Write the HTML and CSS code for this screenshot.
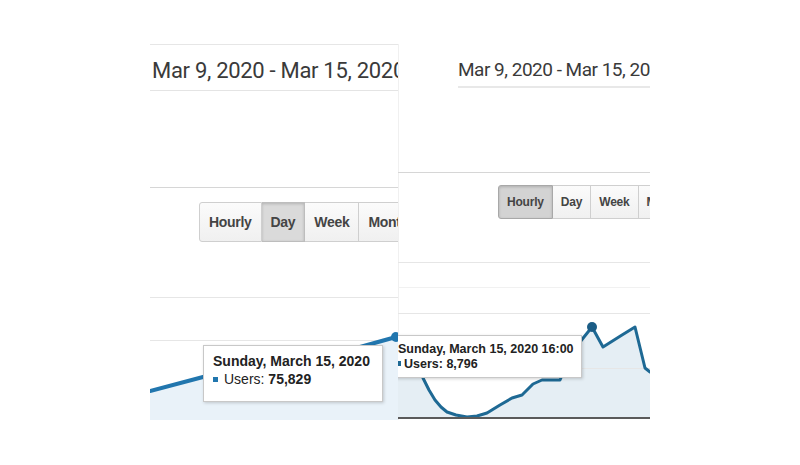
FILE: index.html
```html
<!DOCTYPE html>
<html lang="en">
<head>
  <meta charset="UTF-8">
  <meta name="viewport" content="width=device-width, initial-scale=1.0">
  <title>Users: Day vs Hourly</title>
  <link rel="stylesheet" href="styles.css">
</head>
<body>

  <div class="pair">
    <section class="panel panel-day">
      <div class="range">Mar 9, 2020 - Mar 15, 2020</div>
      <div class="toolbar">
        <div class="periods">
          <button type="button">Hourly</button><button type="button" class="on">Day</button><button type="button">Week</button><button type="button">Month</button>
        </div>
      </div>
      <div class="chart">
        <svg width="248" height="178" viewBox="0 0 248 178">
          <line class="grid" x1="0" y1="55.5" x2="248" y2="55.5"/>
          <line class="grid" x1="0" y1="98.5" x2="248" y2="98.5"/>
          <polygon class="area" points="0,149 53,135 130,120 210,105 246,95 248,95 248,178 0,178"/>
          <polyline class="trend" points="0,149 53,135 130,120 210,105 246,95"/>
          <circle class="dot" cx="246" cy="95" r="5"/>
        </svg>
        <div class="tip">
          <div class="tip-date">Sunday, March 15, 2020</div>
          <div class="tip-row"><span class="mark"></span>Users: <b>75,829</b></div>
        </div>
      </div>
    </section>

    <section class="panel panel-hourly">
      <div class="range">Mar 9, 2020 - Mar 15, 2020</div>
      <div class="toolbar">
        <div class="periods">
          <button type="button" class="on">Hourly</button><button type="button">Day</button><button type="button">Week</button><button type="button">Month</button>
        </div>
      </div>
      <div class="chart">
        <svg width="252" height="201" viewBox="0 0 252 201">
          <line class="grid" x1="0" y1="43.5" x2="252" y2="43.5"/>
          <line class="grid faint" x1="0" y1="68.5" x2="252" y2="68.5"/>
          <line class="grid" x1="0" y1="94.5" x2="252" y2="94.5"/>
          <polygon class="area" points="0,120 12,126 19,143 25,159 31,171 37,181 43,188 49,193 58,196 69,198 79,197 89,194 102,186 114,179 124,176 135,165 144,161 162,161 174,133 194,108 205,128 224,116 237,108 247,149 252,153 252,199 0,199"/>
          <line class="grid" x1="0" y1="149.5" x2="252" y2="149.5"/>
          <polyline class="trend" points="-2,119 12,126 19,143 25,159 31,171 37,181 43,188 49,193 58,196 69,198 79,197 89,194 102,186 114,179 124,176 135,165 144,161 162,161 174,133 194,108 205,128 224,116 237,108 247,149 252,153"/>
          <line class="axis" x1="0" y1="199" x2="252" y2="199"/>
          <circle class="dot" cx="194" cy="108" r="5"/>
        </svg>
        <div class="tip">
          <div class="tip-date">Sunday, March 15, 2020 16:00</div>
          <div class="tip-row"><span class="mark"></span><b>Users: 8,796</b></div>
        </div>
      </div>
    </section>
  </div>

</body>
</html>
```

FILE: styles.css
```css
body {
  margin: 0;
  background: #fff;
  font-family: 'Liberation Sans', Arial, sans-serif;
  color: #333;
}
.pair {
  display: flex;
  justify-content: center;
  padding-top: 44px;
}
.panel {
  overflow: hidden;
  background: #fff;
}
.panel-day {
  width: 248px;
  border-top: 1px solid #e6e6e6;
}
.panel-hourly {
  width: 252px;
  box-shadow: inset 1px 0 0 #f0f0f0;
}
.range {
  font-family: Roboto, 'Liberation Sans', sans-serif;
  white-space: nowrap;
  color: #3a3a3a;
}
.panel-day .range {
  font-size: 22px;
  line-height: 26px;
  letter-spacing: -0.3px;
  padding: 13px 0 6px 2px;
  border-bottom: 1px solid #e4e4e4;
}
.panel-hourly .range {
  font-size: 19px;
  line-height: 22px;
  letter-spacing: -0.5px;
  margin: 15px 0 0 60px;
  padding-bottom: 5px;
  border-bottom: 2px solid #e8e8e8;
}
.toolbar {
  border-top: 1px solid #d6d6d6;
}
.panel-day .toolbar {
  margin-top: 96px;
  padding: 14px 0 0 49px;
}
.panel-hourly .toolbar {
  margin-top: 84px;
  padding: 12px 0 0 100px;
}
.periods {
  display: flex;
  white-space: nowrap;
}
.periods button {
  flex-shrink: 0;
  font-family: 'Liberation Sans', Arial, sans-serif;
  font-weight: bold;
  color: #444;
  background: linear-gradient(#fbfbfb, #f0f0f0);
  border: 1px solid #cfcfcf;
  border-left: none;
  margin: 0;
}
.periods button:first-child {
  border-left: 1px solid #cfcfcf;
  border-radius: 3px 0 0 3px;
}
.periods button.on {
  background: #dadada;
  box-shadow: inset 0 1px 3px rgba(0, 0, 0, 0.18);
  border-color: #bdbdbd;
}
.panel-day .periods button {
  font-size: 14px;
  letter-spacing: -0.3px;
  height: 40px;
  padding: 0 9px;
}
.panel-hourly .periods button {
  font-size: 12px;
  letter-spacing: -0.2px;
  height: 34px;
  padding: 0 8px;
}
.panel-hourly .periods button.on {
  background: #d3d3d3;
  border-color: #a8a8a8;
}
.chart {
  position: relative;
}
.chart svg {
  display: block;
  overflow: visible;
}
.grid {
  stroke: #e6e6e6;
  stroke-width: 1;
}
.grid.faint {
  stroke: #f1f1f1;
}
.axis {
  stroke: #5a5a5a;
  stroke-width: 2;
}
.trend {
  fill: none;
  stroke-linejoin: round;
  stroke-linecap: round;
}
.panel-day .area { fill: #e9f2f9; }
.panel-day .trend { stroke: #2176ae; stroke-width: 4; }
.panel-day .dot { fill: #2176ae; }
.panel-hourly .area { fill: #e5eef4; }
.panel-hourly .trend { stroke: #1e6994; stroke-width: 3; }
.panel-hourly .dot { fill: #1b5d86; }

/* hover tooltips sit over the plot */
.tip {
  position: absolute;
  background: #fff;
  border: 1px solid #c8c8c8;
  box-shadow: 1px 1px 3px rgba(0, 0, 0, 0.18);
  color: #222;
  white-space: nowrap;
}
.tip b {
  font-weight: bold;
}
.mark {
  display: inline-block;
  background: #2176ae;
  vertical-align: middle;
}
.panel-day .tip {
  left: 53px;
  top: 103px;
  width: 169px;
  height: 49px;
  padding: 6px 0 0 9px;
  font-size: 14px;
  line-height: 18px;
}
.panel-day .tip-date {
  font-weight: bold;
}
.panel-day .mark {
  width: 5px;
  height: 5px;
  margin: -2px 6px 0 0;
}
.panel-hourly .tip {
  left: -10px;
  top: 116px;
  width: 183px;
  height: 35px;
  padding: 6px 0 0 9px;
  font-size: 12.5px;
  line-height: 15px;
}
.panel-hourly .tip-date {
  font-weight: bold;
}
.panel-hourly .mark {
  width: 3px;
  height: 5px;
  margin: -2px 3px 0 0;
  background: #1e6994;
}
```
